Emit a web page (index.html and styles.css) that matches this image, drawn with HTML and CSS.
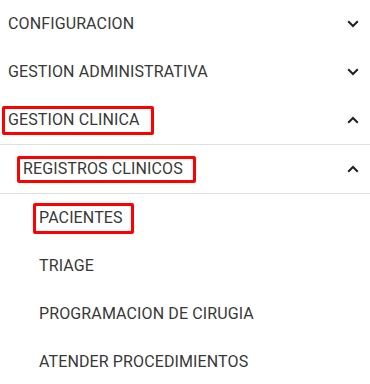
FILE: index.html
```html
<!DOCTYPE html>
<html lang="es">
<head>
<meta charset="utf-8">
<link rel="stylesheet" href="styles.css">
</head>
<body>
<nav class="menu">
  <div class="row lvl1">
    <span class="label">CONFIGURACION</span>
    <svg class="chev" viewBox="0 0 12 8" width="12" height="8"><path d="M1.2 1.2 L6 6 L10.8 1.2"/></svg>
  </div>
  <div class="row lvl1">
    <span class="label">GESTION ADMINISTRATIVA</span>
    <svg class="chev" viewBox="0 0 12 8" width="12" height="8"><path d="M1.2 1.2 L6 6 L10.8 1.2"/></svg>
  </div>
  <div class="row lvl1">
    <span class="label mark m1">GESTION CLINICA</span>
    <svg class="chev" viewBox="0 0 12 8" width="12" height="8"><path d="M1.2 6.8 L6 2 L10.8 6.8"/></svg>
  </div>
  <div class="panel">
    <div class="row lvl2">
      <span class="label mark m2">REGISTROS CLINICOS</span>
      <svg class="chev" viewBox="0 0 12 8" width="12" height="8"><path d="M1.2 6.8 L6 2 L10.8 6.8"/></svg>
    </div>
    <div class="panel">
      <div class="row lvl3"><span class="label mark m3">PACIENTES</span></div>
      <div class="row lvl3"><span class="label">TRIAGE</span></div>
      <div class="row lvl3"><span class="label">PROGRAMACION DE CIRUGIA</span></div>
      <div class="row lvl3"><span class="label">ATENDER PROCEDIMIENTOS</span></div>
    </div>
  </div>
</nav>
</body>
</html>
```
FILE: styles.css
```css
html, body {
  margin: 0;
  padding: 0;
  background: #ffffff;
}
body {
  font-family: Roboto, "Liberation Sans", sans-serif;
  font-size: 16px;
  font-weight: 400;
  letter-spacing: 0.12px;
  color: #383838;
}
.menu {
  display: flex;
  flex-direction: column;
}
.panel {
  border-top: 1px solid #e0e0e0;
}
.row {
  height: 48px;
  display: flex;
  align-items: center;
  justify-content: space-between;
  padding-right: 11px;
  box-sizing: border-box;
}
.lvl1 { padding-left: 2px; }
.lvl2 { padding-left: 17px; }
.lvl3 { padding-left: 33px; }
.label {
  border: 3px solid transparent;
  border-radius: 2px;
  padding: 0 9px 1px 3px;
  line-height: 22px;
}
.mark { border-color: #ff0000; }
.m1 { padding: 0 11px 1px 3px; line-height: 22px; }
.m2 { padding: 0 10px 1px 3px; line-height: 20px; }
.m3 { padding: 0 8px 1px 3px; line-height: 24px; }
.chev {
  fill: none;
  stroke: #202020;
  stroke-width: 2;
  flex: none;
}
```
